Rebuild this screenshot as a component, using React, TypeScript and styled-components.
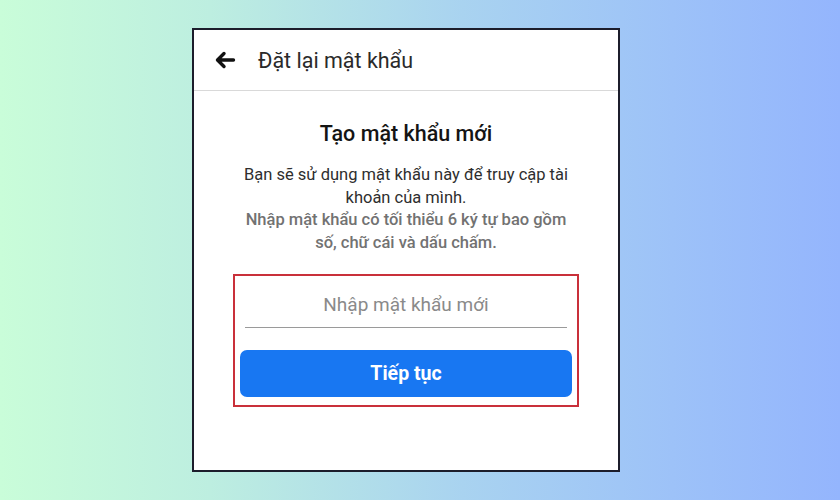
import styled, { createGlobalStyle } from "styled-components";

const Global = createGlobalStyle`
  html, body {
    margin: 0;
    padding: 0;
  }
  body {
    font-family: Roboto, "Liberation Sans", sans-serif;
  }
`;

const Page = styled.div`
  width: 840px;
  height: 500px;
  box-sizing: border-box;
  padding-right: 28px;
  display: flex;
  align-items: center;
  justify-content: center;
  background: linear-gradient(90deg, #c9fdd9 0%, #bdeee0 25%, #a9d3f0 55%, #9dc2f8 80%, #94b5fd 100%);
`;

const Phone = styled.div`
  width: 428px;
  height: 444px;
  box-sizing: border-box;
  border: 2px solid #1c1d2b;
  background: #fff;
  display: flex;
  flex-direction: column;
`;

const Header = styled.div`
  height: 60px;
  display: flex;
  align-items: center;
  gap: 22px;
  padding: 0 0 0 20px;
  border-bottom: 1px solid #d9d9d9;
`;

const HeaderTitle = styled.div`
  font-size: 21.5px;
  color: #2a2a2a;
`;

const Body = styled.div`
  display: flex;
  flex-direction: column;
  align-items: center;
  padding: 29px 0 0;
`;

const Title = styled.h1`
  margin: 0;
  font-size: 21.5px;
  line-height: 28px;
  font-weight: 500;
  color: #141414;
`;

const Text = styled.p<{ $muted?: boolean }>`
  margin: 0;
  width: 332px;
  text-align: center;
  font-size: 16.5px;
  line-height: 22.5px;
  font-weight: ${(p) => (p.$muted ? 500 : 400)};
  color: ${(p) => (p.$muted ? "#727272" : "#2e2e2e")};
`;

const Lines = styled.div`
  margin-top: 16px;
  display: flex;
  flex-direction: column;
  align-items: center;
`;

const Highlight = styled.div`
  margin-top: 20px;
  width: 346px;
  box-sizing: border-box;
  border: 2px solid #c9303a;
  padding: 6px 6px 8px 6px;
  display: flex;
  flex-direction: column;
  align-items: center;
`;

const Input = styled.input`
  width: 322px;
  height: 46px;
  box-sizing: border-box;
  border: none;
  border-bottom: 1px solid #9a9a9a;
  outline: none;
  text-align: center;
  font-family: Roboto, "Liberation Sans", sans-serif;
  font-size: 19px;
  color: #333;
  padding: 0;

  &::placeholder {
    color: #8a8a8a;
  }
`;

const Button = styled.button`
  margin-top: 22px;
  width: 332px;
  height: 47px;
  border: none;
  border-radius: 7px;
  background: #1877f2;
  color: #fff;
  font-family: Roboto, "Liberation Sans", sans-serif;
  font-size: 19.5px;
  font-weight: 700;
`;

const BackArrow = () => (
  <svg width="22" height="20" viewBox="0 0 22 20" fill="none">
    <path
      d="M19.5 10H4M10 3.5L3.5 10 10 16.5"
      stroke="#111"
      strokeWidth="3.4"
      strokeLinecap="round"
      strokeLinejoin="round"
    />
  </svg>
);

export default function App() {
  return (
    <>
      <Global />
      <Page>
        <Phone>
          <Header>
            <BackArrow />
            <HeaderTitle>Đặt lại mật khẩu</HeaderTitle>
          </Header>
          <Body>
            <Title>Tạo mật khẩu mới</Title>
            <Lines>
              <Text>Bạn sẽ sử dụng mật khẩu này để truy cập tài khoản của mình.</Text>
              <Text $muted>Nhập mật khẩu có tối thiểu 6 ký tự bao gồm số, chữ cái và dấu chấm.</Text>
            </Lines>
            <Highlight>
              <Input type="password" placeholder="Nhập mật khẩu mới" />
              <Button>Tiếp tục</Button>
            </Highlight>
          </Body>
        </Phone>
      </Page>
    </>
  );
}
